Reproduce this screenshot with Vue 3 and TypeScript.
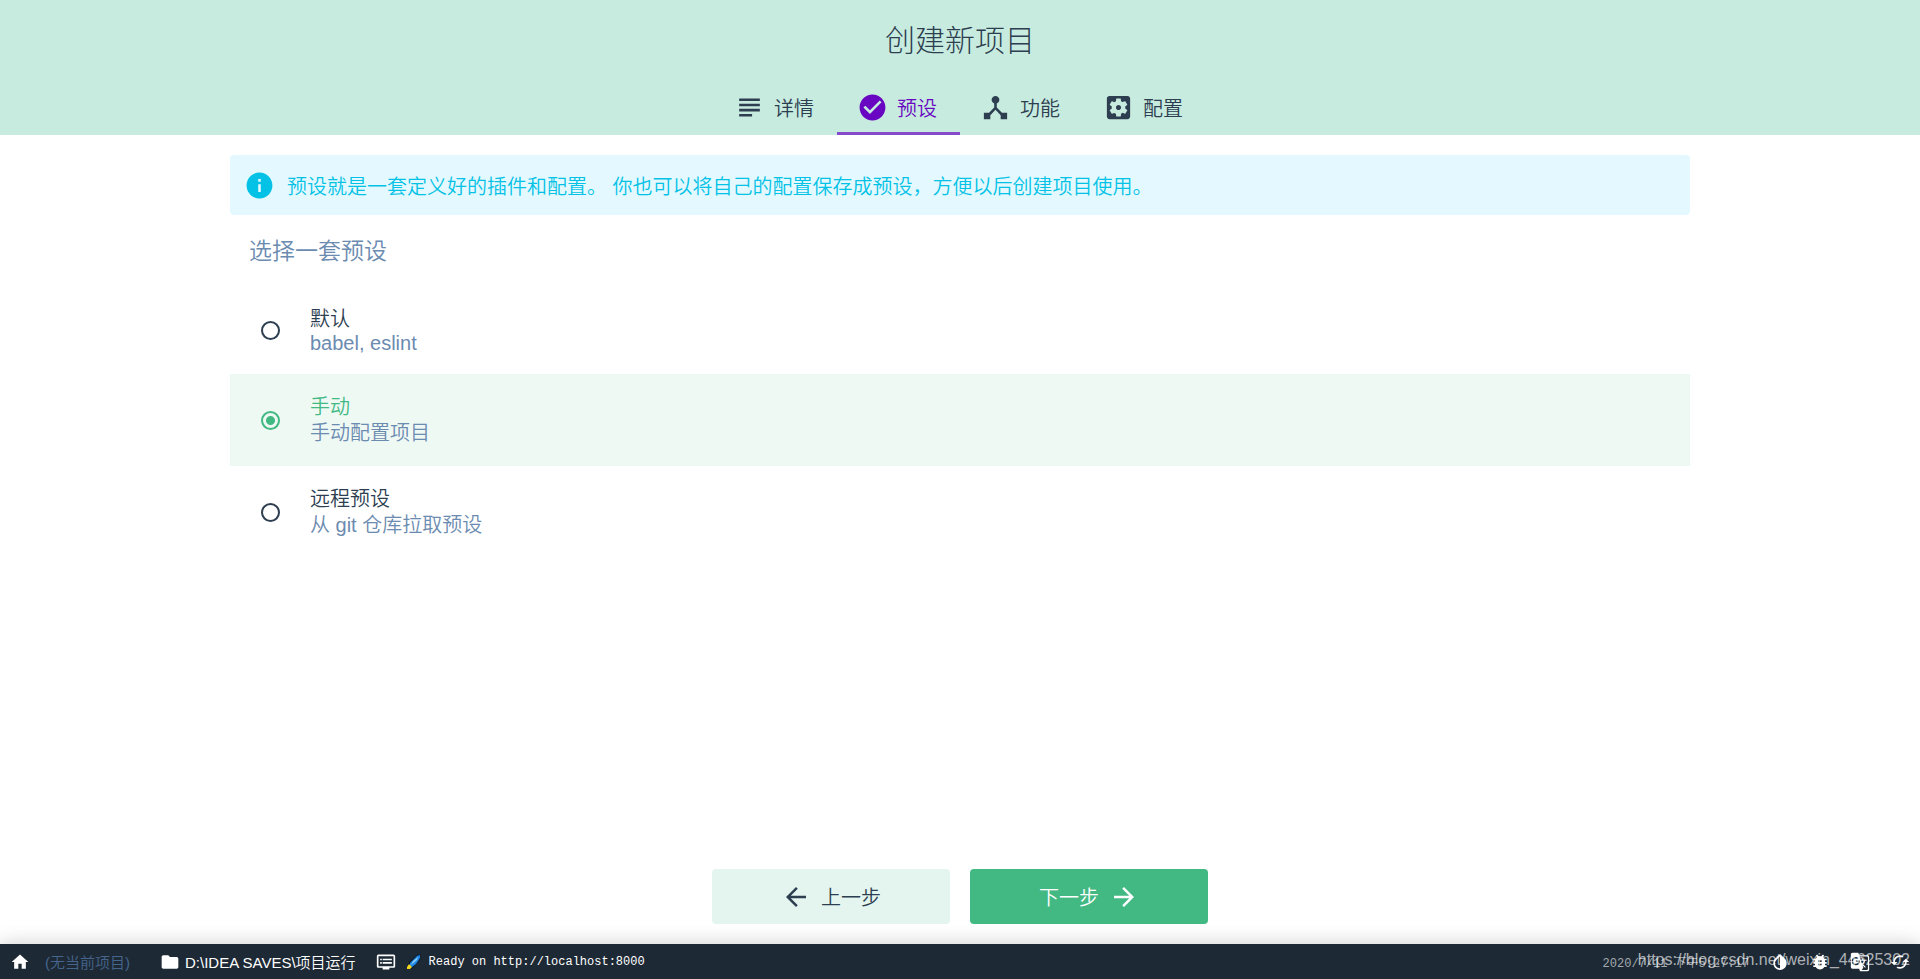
<script setup lang="ts">
import { ref } from 'vue'

interface Tab { id: string; label: string; icon: string }
interface Preset { id: string; name: string; description: string; latin?: boolean }

const tabs: Tab[] = [
  { id: 'details', label: '详情', icon: 'M4 5h16v2H4zM4 9h16v2H4zM4 13h16v2H4zM4 17h10v2H4z' },
  { id: 'presets', label: '预设', icon: 'M12 2C6.48 2 2 6.48 2 12s4.48 10 10 10 10-4.48 10-10S17.52 2 12 2zm-2 15l-5-5 1.41-1.41L10 14.17l7.59-7.59L19 8l-9 9z' },
  { id: 'features', label: '功能', icon: 'M17 16l-4-4V8.82C14.16 8.4 15 7.3 15 6c0-1.66-1.34-3-3-3S9 4.34 9 6c0 1.3.84 2.4 2 2.82V12l-4 4H3v5h5v-3.05l4-4.2 4 4.2V21h5v-5h-4z' },
  { id: 'config', label: '配置', icon: 'M12 10c-1.1 0-2 .9-2 2s.9 2 2 2 2-.9 2-2-.9-2-2-2zm7-7H5c-1.11 0-2 .9-2 2v14c0 1.1.89 2 2 2h14c1.11 0 2-.9 2-2V5c0-1.1-.89-2-2-2zm-1.75 9c0 .23-.02.46-.05.68l1.48 1.16c.13.11.17.3.08.45l-1.4 2.42c-.09.15-.27.21-.43.15l-1.74-.7c-.36.28-.76.51-1.18.69l-.26 1.85c-.03.17-.18.3-.35.3h-2.8c-.17 0-.32-.13-.35-.29l-.26-1.85c-.43-.18-.82-.41-1.18-.69l-1.74.7c-.16.06-.34 0-.43-.15l-1.4-2.42c-.09-.15-.05-.34.08-.45l1.48-1.16c-.03-.23-.05-.46-.05-.69 0-.23.02-.46.05-.68l-1.48-1.16c-.13-.11-.17-.3-.08-.45l1.4-2.42c.09-.15.27-.21.43-.15l1.74.7c.36-.28.76-.51 1.18-.69l.26-1.85c.03-.17.18-.3.35-.3h2.8c.17 0 .32.13.35.29l.26 1.85c.43.18.82.41 1.18.69l1.74-.7c.16-.06.34 0 .43.15l1.4 2.42c.09.15.05.34-.08.45l-1.48 1.16c.03.23.05.46.05.69z' },
]
const presets: Preset[] = [
  { id: 'default', name: '默认', description: 'babel, eslint', latin: true },
  { id: 'manual', name: '手动', description: '手动配置项目' },
  { id: 'remote', name: '远程预设', description: '从 git 仓库拉取预设' },
]
const tools = [
  { id: 'theme', label: '切换主题', icon: 'M17.66 7.93L12 2.27 6.34 7.93c-3.12 3.12-3.12 8.19 0 11.31C7.9 20.8 9.95 21.58 12 21.58c2.05 0 4.1-.78 5.66-2.34 3.12-3.12 3.12-8.19 0-11.31zM12 19.59c-1.6 0-3.11-.62-4.24-1.76C6.62 16.69 6 15.19 6 13.59s.62-3.11 1.76-4.24L12 5.1v14.49z' },
  { id: 'bug', label: '报告问题', icon: 'M20 8h-2.81c-.45-.78-1.07-1.45-1.82-1.96L17 4.41 15.59 3l-2.17 2.17C12.96 5.06 12.49 5 12 5s-.96.06-1.41.17L8.41 3 7 4.41l1.62 1.63C7.88 6.55 7.26 7.22 6.81 8H4v2h2.09C6.04 10.33 6 10.66 6 11v1H4v2h2v1c0 .34.04.67.09 1H4v2h2.81c1.04 1.79 2.97 3 5.19 3s4.15-1.21 5.19-3H20v-2h-2.09c.05-.33.09-.66.09-1v-1h2v-2h-2v-1c0-.34-.04-.67-.09-1H20V8zm-6 8h-4v-2h4v2zm0-4h-4v-2h4v2z' },
  { id: 'translate', label: '帮助翻译', icon: 'M21 4H11l-1-3H3c-1.1 0-2 .9-2 2v15c0 1.1.9 2 2 2h8l1 3h9c1.1 0 2-.9 2-2V6c0-1.1-.9-2-2-2zM7 16c-2.76 0-5-2.24-5-5s2.24-5 5-5c1.35 0 2.48.5 3.35 1.3L9.03 8.57c-.38-.36-1.04-.78-2.03-.78-1.74 0-3.15 1.44-3.15 3.21S5.26 14.21 7 14.21c2.01 0 2.84-1.44 2.92-2.41H7v-1.71h4.68c.07.31.12.61.12 1.02C11.8 13.97 9.89 16 7 16zm6.17-5.42h3.7c-.43 1.25-1.11 2.43-2.05 3.47-.31-.35-.6-.72-.86-1.1l-.79-2.37zm8.33 9.92c0 .55-.45 1-1 1H14l2-2.5-1.04-3.1 3.1 3.1.92-.92-3.3-3.25.02-.02c1.13-1.25 1.93-2.69 2.4-4.22H20v-1.3h-4.53V8h-1.29v1.29h-1.44L11.46 5.5h9.04c.55 0 1 .45 1 1v14z' },
  { id: 'refresh', label: '重置', icon: 'M19 8l-4 4h3c0 3.31-2.69 6-6 6-1.01 0-1.97-.25-2.8-.7l-1.46 1.46C8.97 19.54 10.43 20 12 20c4.42 0 8-3.58 8-8h3l-4-4zM6 12c0-3.31 2.69-6 6-6 1.01 0 1.97.25 2.8.7l1.46-1.46C15.03 4.46 13.57 4 12 4c-4.42 0-8 3.58-8 8H1l4 4 4-4H6z' },
]
const activeTab = ref('presets')
const selected = ref('manual')
</script>

<template>
  <div class="page">
    <header class="header">
      <h1 class="title">创建新项目</h1>
      <nav class="tabs" role="tablist">
        <button
          v-for="tab in tabs"
          :key="tab.id"
          type="button"
          role="tab"
          class="tab"
          :class="{ active: tab.id === activeTab }"
          :aria-selected="tab.id === activeTab"
          @click="activeTab = tab.id"
        >
          <svg class="tab-icon" viewBox="0 0 24 24" aria-hidden="true"><path :d="tab.icon" /></svg>
          <span>{{ tab.label }}</span>
        </button>
      </nav>
    </header>

    <main class="content">
      <div class="banner">
        <svg class="info-icon" viewBox="0 0 24 24" aria-hidden="true">
          <path d="M12 2C6.48 2 2 6.48 2 12s4.48 10 10 10 10-4.48 10-10S17.52 2 12 2zm1 15h-2v-6h2v6zm0-8h-2V7h2v2z" />
        </svg>
        <p>预设就是一套定义好的插件和配置。 你也可以将自己的配置保存成预设，方便以后创建项目使用。</p>
      </div>

      <h2 class="section-title">选择一套预设</h2>

      <div class="presets" role="radiogroup" aria-label="选择一套预设">
        <label
          v-for="preset in presets"
          :key="preset.id"
          class="preset"
          :class="{ selected: preset.id === selected }"
        >
          <input v-model="selected" class="radio" type="radio" name="preset" :value="preset.id" />
          <span class="preset-info">
            <span class="preset-name">{{ preset.name }}</span>
            <span class="preset-description" :class="{ latin: preset.latin }">{{ preset.description }}</span>
          </span>
        </label>
      </div>
    </main>

    <div class="actions">
      <button type="button" class="action previous">
        <svg class="arrow" viewBox="0 0 24 24" aria-hidden="true"><path d="M20 11H7.83l5.59-5.59L12 4l-8 8 8 8 1.41-1.41L7.83 13H20v-2z" /></svg>
        <span>上一步</span>
      </button>
      <button type="button" class="action next">
        <span>下一步</span>
        <svg class="arrow" viewBox="0 0 24 24" aria-hidden="true"><path d="M12 4l-1.41 1.41L16.17 11H4v2h12.17l-5.58 5.59L12 20l8-8z" /></svg>
      </button>
    </div>

    <footer class="status">
      <button type="button" class="status-item home">
        <svg class="status-icon" viewBox="0 0 24 24" aria-hidden="true"><path d="M10 20v-6h4v6h5v-8h3L12 3 2 12h3v8z" /></svg>
        <span class="muted">(无当前项目)</span>
      </button>
      <button type="button" class="status-item folder">
        <svg class="status-icon" viewBox="0 0 24 24" aria-hidden="true"><path d="M10 4H4c-1.1 0-1.99.9-1.99 2L2 18c0 1.1.9 2 2 2h16c1.1 0 2-.9 2-2V8c0-1.1-.9-2-2-2h-8l-2-2z" /></svg>
        <span>D:\IDEA SAVES\项目运行</span>
      </button>
      <button type="button" class="status-item log">
        <svg class="status-icon" viewBox="0 0 24 24" aria-hidden="true"><path d="M21 3H3c-1.1 0-2 .9-2 2v12c0 1.1.9 2 2 2h5v2h8v-2h5c1.1 0 1.99-.9 1.99-2L23 5c0-1.1-.9-2-2-2zm0 14H3V5h18v12zm-2-9H8v2h11V8zm0 4H8v2h11v-2zM7 8H5v2h2V8zm0 4H5v2h2v-2z" /></svg>
        <svg class="rocket" viewBox="0 0 16 16" aria-hidden="true">
          <path d="M14 0L11 1 3 8l-2 5v2h4l5-4 4-5 1-5z" fill="#0b1a33" />
          <path d="M14 1l-3 1-7 7v3l2 1 4-3 4-6z" fill="#1e88e5" />
          <path d="M12 3L7 7l-2 4 6-5z" fill="#8bc9f5" />
          <path d="M3 10l-2 3v2h3l2-2z" fill="#f6d51f" />
        </svg>
        <span class="message">Ready on http://localhost:8000</span>
      </button>
      <div class="status-end">
        <time class="date">2020/7/11 下午5:27:17</time>
        <button v-for="tool in tools" :key="tool.id" type="button" class="tool" :aria-label="tool.label">
          <svg class="tool-icon" viewBox="0 0 24 24" aria-hidden="true"><path :d="tool.icon" /></svg>
        </button>
      </div>
      <span class="watermark">https://blog.csdn.net/weixin_44625302</span>
    </footer>
  </div>
</template>

<style>
body {
  margin: 0;
}
</style>

<style scoped>
.page {
  display: flex;
  flex-direction: column;
  min-height: 100vh;
  background: #fff;
  color: #2c3e50;
  font-family: "Liberation Sans", "Noto Sans CJK SC", sans-serif;
  font-size: 20px;
  font-weight: 350;
}
button {
  margin: 0;
  padding: 0;
  border: 0;
  background: none;
  color: inherit;
  font: inherit;
  cursor: pointer;
}
svg {
  flex: none;
  fill: currentColor;
}
h1,
h2,
p {
  margin: 0;
  font-weight: 350;
}
.header {
  background: #c8ebdf;
}
.title {
  padding-top: 21px;
  font-size: 30px;
  font-weight: 300;
  line-height: 40px;
  text-align: center;
}
.tabs {
  display: flex;
  justify-content: center;
  padding-top: 20px;
}
.tab {
  display: flex;
  align-items: center;
  gap: 9px;
  height: 54px;
  padding: 2px 23px 0 20px;
  border-bottom: 3px solid transparent;
  box-sizing: border-box;
}
.tab.active {
  color: #6806c1;
  border-bottom-color: #864bcb;
}
.tab-icon {
  width: 31px;
  height: 31px;
}
.content {
  flex: 1;
  padding: 20px 230px;
}
.banner {
  display: flex;
  align-items: center;
  gap: 12px;
  min-height: 60px;
  padding: 0 14px;
  border-radius: 4px;
  background: #e3f9ff;
  color: #03c2e6;
}
.info-icon {
  width: 31px;
  height: 31px;
}
.section-title {
  padding: 21px 19px 20px;
  color: #6b8bb0;
  font-size: 23px;
  line-height: 30px;
}
.preset {
  display: flex;
  align-items: center;
  gap: 30px;
  padding: 20px 31px;
  cursor: pointer;
}
.preset.selected {
  background: #eff9f4;
}
.radio {
  appearance: none;
  flex: none;
  width: 19px;
  height: 19px;
  margin: 0;
  border: 2px solid #2c3e50;
  border-radius: 50%;
}
.radio:checked {
  border-color: #42b983;
  background: radial-gradient(circle, #42b983 4px, transparent 5px);
}
.preset-info {
  display: flex;
  flex-direction: column;
  line-height: 26px;
}
.selected .preset-name {
  color: #42b983;
}
.preset-description {
  color: #6b8bb0;
}
.preset-description.latin {
  line-height: 22px;
}
.actions {
  display: flex;
  justify-content: center;
  gap: 20px;
  padding-bottom: 20px;
}
.action {
  display: flex;
  align-items: center;
  justify-content: center;
  gap: 10px;
  width: 238px;
  height: 55px;
  border-radius: 4px;
}
.previous {
  background: #e4f5ef;
}
.next {
  background: #42b983;
  color: #fff;
}
.arrow {
  width: 30px;
  height: 30px;
}
.status {
  position: relative;
  display: flex;
  align-items: center;
  height: 35px;
  padding-left: 10px;
  background: #1d2935;
  color: #fff;
  box-shadow: 0 0 20px rgba(0, 0, 0, 0.2);
  font-size: 15px;
}
.status-item {
  display: flex;
  align-items: center;
}
.status-icon {
  width: 20px;
  height: 20px;
}
.home {
  gap: 15px;
}
.folder {
  gap: 5px;
  margin-left: 30px;
}
.log {
  margin-left: 20px;
}
.muted {
  color: #45658c;
}
.rocket {
  width: 16px;
  height: 16px;
  margin: 0 7px 0 10px;
}
.message,
.date {
  font-family: "Liberation Mono", "Noto Sans CJK SC", monospace;
  font-size: 12px;
}
.status-end {
  display: flex;
  align-items: center;
  margin-left: auto;
}
.date {
  margin-right: 11px;
  color: #a4a9ae;
}
.tool {
  display: flex;
  padding: 0 10px;
}
.tool-icon {
  width: 20px;
  height: 20px;
}
.watermark {
  position: absolute;
  right: 10px;
  bottom: 10px;
  color: rgba(255, 255, 255, 0.65);
  font-size: 16px;
  line-height: 18px;
  pointer-events: none;
}
</style>
